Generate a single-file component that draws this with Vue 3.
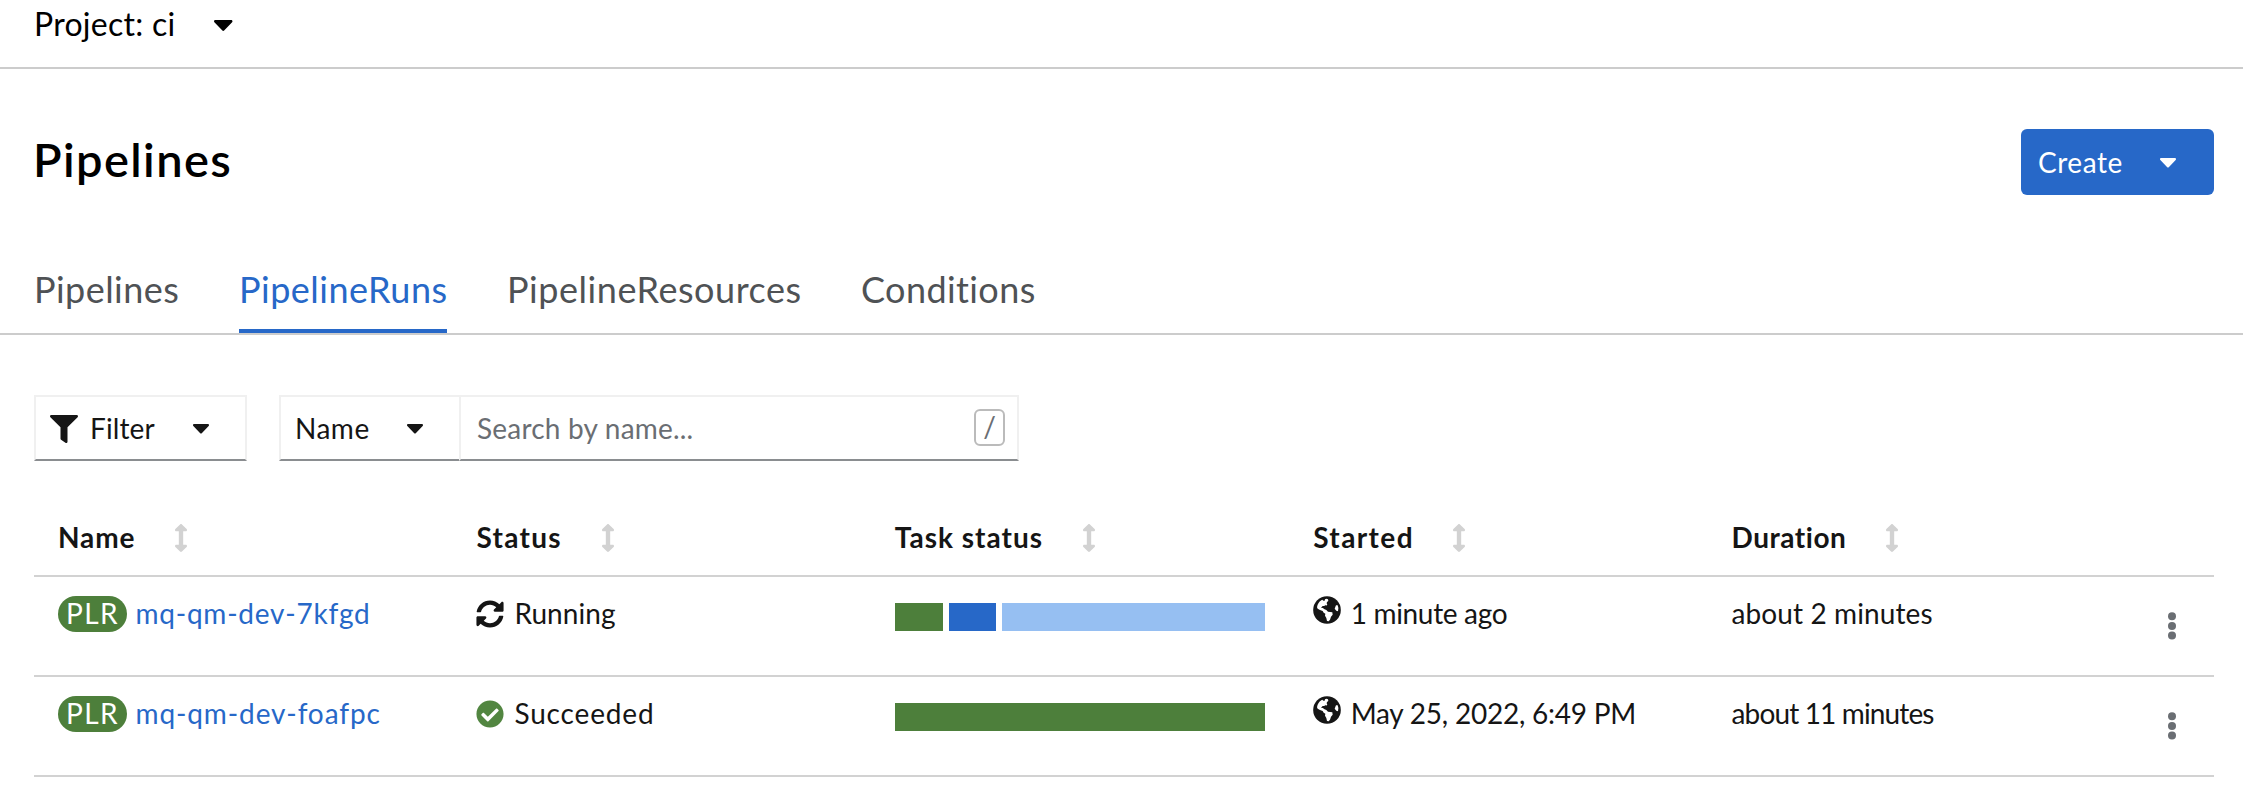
<script setup>
const tabs = [
  { label: 'Pipelines', spacing: 0.45 },
  { label: 'PipelineRuns', spacing: 0.5, active: true },
  { label: 'PipelineResources', spacing: 0.55 },
  { label: 'Conditions', spacing: 0.4 },
]

const columns = [
  { label: 'Name', spacing: 0.88, width: 75 },
  { label: 'Status', spacing: 1.32, width: 84 },
  { label: 'Task status', spacing: 1.0, width: 146 },
  { label: 'Started', spacing: 1.4, width: 98 },
  { label: 'Duration', spacing: 0.53, width: 112.5 },
]

const runs = [
  {
    name: { text: 'mq-qm-dev-7kfgd', spacing: 0.77 },
    status: { text: 'Running', spacing: 0.06, icon: 'sync' },
    tasks: [
      { kind: 'succeeded', width: 48 },
      { kind: 'running', width: 47 },
      { kind: 'pending', width: 263 },
    ],
    started: { text: '1 minute ago', spacing: -0.32 },
    duration: { text: 'about 2 minutes', spacing: 0.1 },
  },
  {
    name: { text: 'mq-qm-dev-foafpc', spacing: 0.89 },
    status: { text: 'Succeeded', spacing: 0.84, icon: 'check' },
    tasks: [{ kind: 'succeeded', width: 370 }],
    started: { text: 'May 25, 2022, 6:49 PM', spacing: -0.23 },
    duration: { text: 'about 11 minutes', spacing: -0.86 },
  },
]

const track = (v) => ({ letterSpacing: v + 'px' })
const caret =
  'M31.3 192h257.3c17.8 0 26.7 21.5 14.1 34.1L174.1 354.7c-7.8 7.8-20.5 7.8-28.3 0L17.2 226.1C4.6 213.5 13.5 192 31.3 192z'
</script>

<template>
  <div class="page">
    <header class="project-bar">
      <span class="project-name">Project: ci</span>
      <svg class="project-caret" viewBox="11 192 298 169" preserveAspectRatio="none"><path :d="caret" /></svg>
    </header>

    <section class="heading">
      <h1 class="title">Pipelines</h1>
      <button class="create">
        <span class="create-label">Create</span>
        <svg class="caret" viewBox="11 192 298 169" preserveAspectRatio="none"><path :d="caret" /></svg>
      </button>
    </section>

    <nav class="tabs">
      <a v-for="tab in tabs" :key="tab.label" class="tab" :class="{ active: tab.active }" :style="track(tab.spacing)">{{ tab.label }}</a>
    </nav>

    <section class="toolbar">
      <div class="control filter">
        <svg class="filter-icon" viewBox="0 0 512 512"><path d="M487.976 0H24.028C2.71 0-8.047 25.866 7.058 40.971L192 225.941V432c0 7.831 3.821 15.17 10.237 19.662l80 55.98C298.02 518.69 320 507.493 320 487.98V225.941l184.947-184.97C520.021 25.896 509.338 0 487.976 0z" /></svg>
        <span class="filter-label">Filter</span>
        <svg class="caret" viewBox="11 192 298 169" preserveAspectRatio="none"><path :d="caret" /></svg>
      </div>
      <div class="control attribute">
        <span class="attribute-label">Name</span>
        <svg class="caret" viewBox="11 192 298 169" preserveAspectRatio="none"><path :d="caret" /></svg>
      </div>
      <div class="control search">
        <span class="placeholder">Search by name...</span>
        <kbd class="shortcut">/</kbd>
      </div>
    </section>

    <section class="table">
      <div class="row head">
        <div v-for="col in columns" :key="col.label" class="cell head-cell">
          <span class="head-label" :style="{ ...track(col.spacing), width: col.width + 'px' }">{{ col.label }}</span>
          <svg class="sort" viewBox="0 0 256 512"><path d="M214.059 377.941H168V134.059h46.059c21.382 0 32.09-25.851 16.971-40.971L144.971 7.029c-9.373-9.373-24.568-9.373-33.941 0L24.971 93.088c-15.119 15.119-4.411 40.971 16.971 40.971H88v243.882H41.941c-21.382 0-32.09 25.851-16.971 40.971l86.059 86.059c9.373 9.373 24.568 9.373 33.941 0l86.059-86.059c15.12-15.119 4.412-40.971-16.97-40.971z" /></svg>
        </div>
      </div>

      <div v-for="run in runs" :key="run.name.text" class="row body">
        <div class="cell">
          <span class="badge">PLR</span>
          <a class="link" :style="track(run.name.spacing)">{{ run.name.text }}</a>
        </div>
        <div class="cell">
          <svg v-if="run.status.icon === 'sync'" class="status-icon" viewBox="0 0 512 512"><path d="M370.72 133.28C339.458 104.008 298.888 87.962 255.848 88c-77.458.068-144.328 53.178-162.791 126.85-1.344 5.363-6.122 9.15-11.651 9.15H24.103c-7.498 0-13.194-6.807-11.807-14.176C33.933 94.924 134.813 8 256 8c66.448 0 126.791 26.136 171.315 68.685L463.03 40.97C478.149 25.851 504 36.559 504 57.941V192c0 13.255-10.745 24-24 24H345.941c-21.382 0-32.09-25.851-16.971-40.971l41.75-41.749zM32 296h134.059c21.382 0 32.09 25.851 16.971 40.971l-41.75 41.75c31.262 29.273 71.835 45.319 114.876 45.28 77.418-.07 144.315-53.144 162.787-126.849 1.344-5.363 6.122-9.15 11.651-9.15h57.304c7.498 0 13.194 6.807 11.807 14.176C478.067 417.076 377.187 504 256 504c-66.448 0-126.791-26.136-171.315-68.685L48.97 471.03C33.851 486.149 8 475.441 8 454.059V320c0-13.255 10.745-24 24-24z" /></svg>
          <svg v-else class="status-icon success" viewBox="0 0 512 512"><path d="M504 256c0 136.967-111.033 248-248 248S8 392.967 8 256 119.033 8 256 8s248 111.033 248 248zM227.314 387.314l184-184c6.248-6.248 6.248-16.379 0-22.627l-22.627-22.627c-6.248-6.249-16.379-6.249-22.628 0L216 308.118l-70.059-70.059c-6.248-6.248-16.379-6.248-22.628 0l-22.627 22.627c-6.248 6.248-6.248 16.379 0 22.627l104 104c6.249 6.249 16.379 6.249 22.628.001z" /></svg>
          <span :style="track(run.status.spacing)">{{ run.status.text }}</span>
        </div>
        <div class="cell bars">
          <i v-for="task in run.tasks" :key="task.kind" class="bar" :class="task.kind" :style="{ width: task.width + 'px' }"></i>
        </div>
        <div class="cell">
          <svg class="globe" viewBox="0 0 84 84">
            <circle cx="42" cy="42" r="41.5" />
            <path class="land" d="M12 34Q14 20 25 13L28 11L31 14L35 14L36 10L40 8L45 10L46 15L42 18L41 22L43 26L39 29L36 26L35 30L29 30L24 35L30 36L33 39L40 42L45 47L58 49L59 56L54 62L51 71L47 76L42 75L40 66L36 59L37 53L32 50L29 45L21 42L14 38Z" />
            <path class="land" d="M69 28L74 28Q78 36 75 46L70 44L65 38Z" />
          </svg>
          <span :style="track(run.started.spacing)">{{ run.started.text }}</span>
        </div>
        <div class="cell"><span :style="track(run.duration.spacing)">{{ run.duration.text }}</span></div>
        <div class="cell actions">
          <svg class="kebab" viewBox="0 0 8 28"><circle cx="4" cy="4.2" r="4" /><circle cx="4" cy="14" r="4" /><circle cx="4" cy="23.6" r="4" /></svg>
        </div>
      </div>
    </section>
  </div>
</template>

<style>
body { background: #fff; }
</style>

<style scoped>
.page {
  width: 2243px;
  height: 797px;
  overflow: hidden;
  font-family: Lato, sans-serif;
  font-size: 28px;
  color: #151515;
  white-space: nowrap;
}
svg { display: block; flex: none; fill: currentColor; }

.project-bar {
  display: flex;
  align-items: flex-start;
  height: 67px;
  padding-left: 34px;
  border-bottom: 2px solid #ccc;
  color: #000;
}
.project-name { width: 180px; font-size: 32px; line-height: 48px; letter-spacing: 0.27px; }
.project-caret { width: 18.5px; height: 11px; margin-top: 20px; }

.heading {
  display: flex;
  align-items: center;
  justify-content: space-between;
  height: 66px;
  padding: 60px 29px 0 33px;
}
.title {
  margin: 0;
  padding-bottom: 7px;
  font-size: 47px;
  font-weight: 600;
  line-height: 56px;
  letter-spacing: 1.4px;
  color: #000;
}
.create {
  display: flex;
  align-items: center;
  width: 193px;
  height: 66px;
  padding: 0 0 0 17px;
  border: 0;
  border-radius: 6px;
  background: #2768c8;
  color: #fff;
  font: inherit;
}
.create-label { width: 122px; text-align: left; line-height: 64px; letter-spacing: 0.56px; }
.caret { width: 16px; height: 9.5px; margin-top: 2px; }

.tabs {
  display: grid;
  grid-template-columns: 145px 208px 294px 176px;
  column-gap: 60px;
  margin-top: 60px;
  padding-left: 34px;
  border-bottom: 2px solid #ccc;
}
.tab {
  height: 74px;
  border-bottom: 4px solid transparent;
  font-size: 36px;
  line-height: 68px;
  color: #4f5255;
}
.tab.active { border-color: #2768c8; color: #2768c8; }

.toolbar { display: flex; margin: 60px 0 0 34px; }
.control {
  display: flex;
  align-items: center;
  box-sizing: border-box;
  height: 66px;
  border: 2px solid #f0f0f0;
  border-bottom-color: #8a8d90;
  line-height: 60px;
}
.filter { width: 213px; margin-right: 32px; padding-left: 14px; }
.filter-icon { width: 28px; height: 28px; margin-top: 2px; }
.filter-label { width: 102px; margin-left: 12px; margin-right: 1px; letter-spacing: 0.13px; }
.attribute { width: 180px; padding-left: 14px; border-right: 0; }
.attribute-label { width: 112px; letter-spacing: 0.5px; }
.search { width: 560px; justify-content: space-between; padding: 0 12px 0 16px; color: #6a6e73; }
.placeholder { letter-spacing: 0.2px; }
.shortcut {
  box-sizing: border-box;
  width: 31px;
  height: 37px;
  border: 2px solid #bbb;
  border-radius: 6px;
  font: 28px/31px Lato, sans-serif;
  text-align: center;
  margin-bottom: 1px;
}

.table { margin: 40px 29px 0 34px; }
.row {
  display: grid;
  grid-template-columns: repeat(5, 418.4px) 1fr;
  border-bottom: 2px solid #d2d2d2;
}
.head { height: 74px; font-weight: 700; line-height: 72px; }
.body { height: 98px; line-height: 34px; }
.cell { display: flex; align-items: flex-start; padding: 19px 0 0 24px; }
.head-cell { padding-top: 0; }
.sort { width: 14px; height: 28px; margin: 23px 0 0 41px; color: #d2d2d2; }
.badge {
  box-sizing: border-box;
  width: 69px;
  height: 36px;
  margin-right: 8.5px;
  padding-left: 8px;
  border-radius: 18px;
  background: #4d7f3b;
  color: #fff;
  letter-spacing: 1.4px;
}
.link { color: #2768c8; }
.status-icon { width: 28px; height: 28px; margin: 4px 10px 0 0; }
.success { color: #528641; }
.bars { gap: 6px; padding-top: 26px; }
.bar { height: 28px; }
.bar.succeeded { background: #4d7f3b; }
.bar.running { background: #2768c8; }
.bar.pending { background: #96bff2; }
.globe { width: 28px; height: 28px; margin: 0 9.5px 0 0; }
.land { fill: #fff; }
.actions { padding: 35px 38px 0 0; justify-content: flex-end; color: #6a6e73; }
.kebab { width: 8px; height: 28px; }
</style>
